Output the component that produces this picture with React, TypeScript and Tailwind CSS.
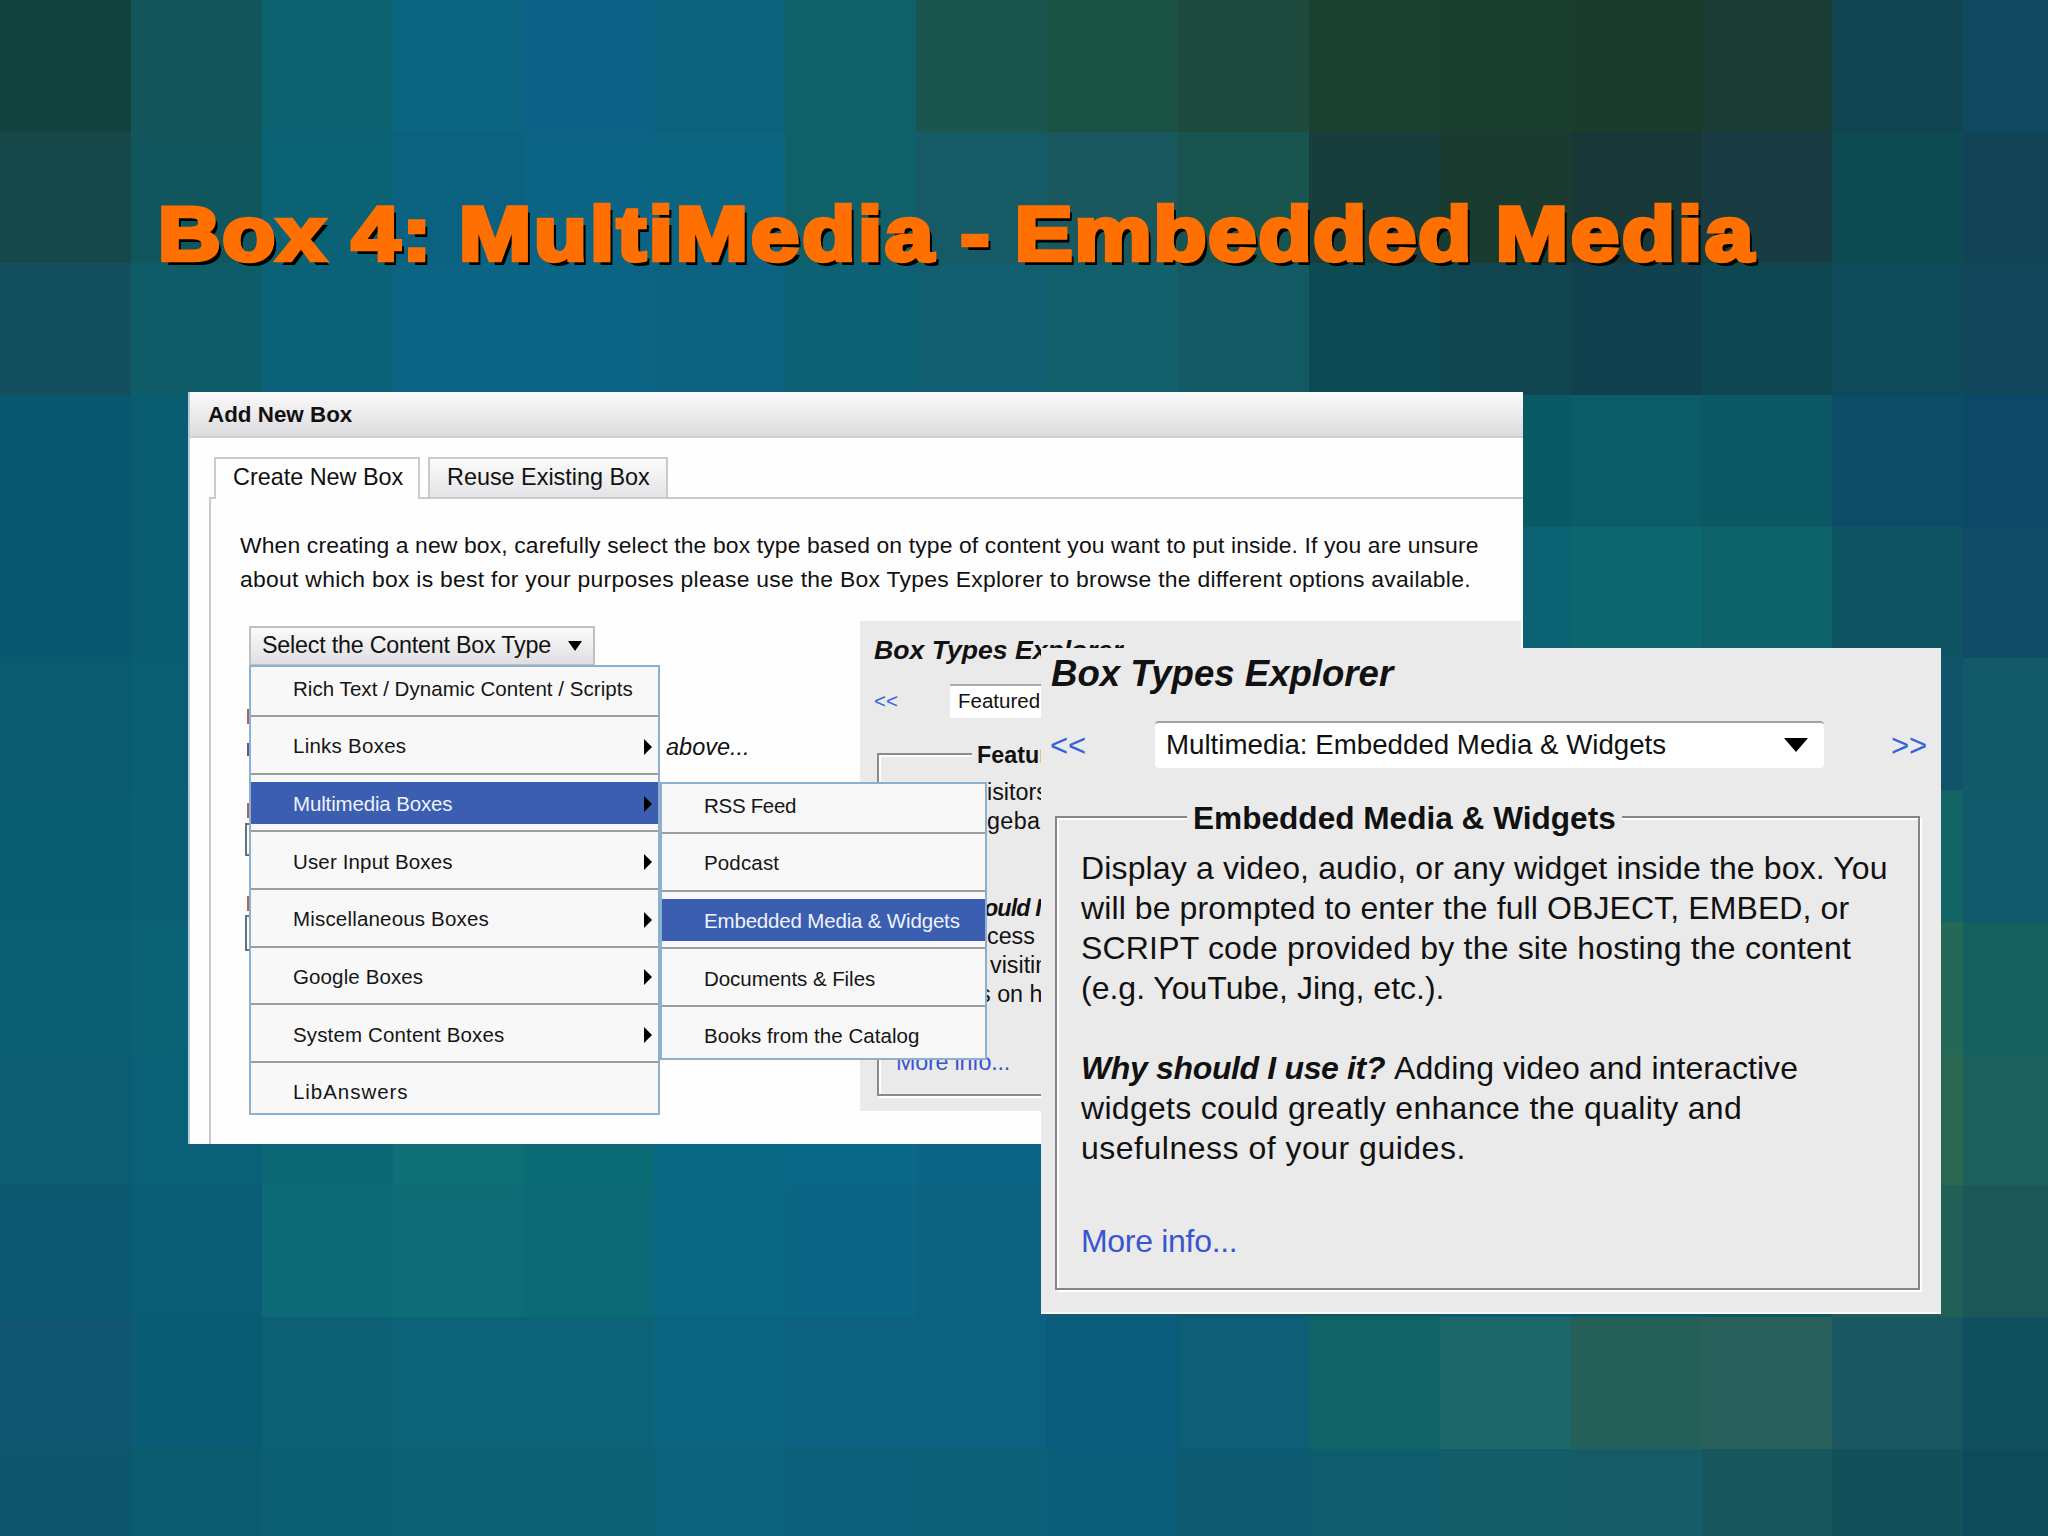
import React from 'react';

interface MenuEntry {
  label: string;
  tracking: string;
  hasChildren?: boolean;
  active?: boolean;
}

interface TitleWord {
  text: string;
  className: string;
}

// Backdrop mosaic, 16 x 12 tiles
const tiles: string[][] = [
  ['14423e', '12555a', '0d6270', '0b6480', '0b6286', '0b627c', '10606a', '1a554e', '1a5244', '1e4a3e', '1c4030', '1a3e2e', '1a3c2c', '1b3c34', '104450', '104860'],
  ['16484a', '10565c', '0b6274', '0b6280', '0b6484', '0b6480', '10606a', '155a64', '18585e', '1a544e', '183e3c', '1a3c30', '183838', '183c42', '0e4a52', '124456'],
  ['125060', '0e5c68', '0b6278', '0b6484', '0b6484', '0c6280', '0c6274', '105e70', '12606c', '145a64', '0e4a54', '10444e', '11414f', '0d4852', '0f4a5a', '12465a'],
  ['0a5870', '0a5c70', '0b6278', '0b6484', '0b6484', '0c6280', '0c6274', '105e70', '12606c', '145a64', '0e4a54', '0a5a66', '0b5c66', '0c5864', '0d4c66', '0e4868'],
  ['0a5870', '0a5c70', '0b6278', '0b6484', '0b6484', '0c6280', '0c6274', '105e70', '12606c', '145a64', '0e5a64', '0a6272', '0b666e', '0c6268', '0e5462', '104c66'],
  ['0a5a70', '0a5e72', '0b6278', '0b6484', '0b6484', '0c6280', '0c6274', '105e70', '12606c', '145a64', '0e5a64', '0a5c70', '0a5c6c', '0c5a68', '0f5468', '125a6a'],
  ['0a5c70', '0a6072', '0b6278', '0b6484', '0b6484', '0c6280', '0c6274', '105e70', '12606c', '145a64', '0e5a64', '0a5c70', '0a5c6c', '0c5a68', '126464', '105a6c'],
  ['0a6070', '0a6274', '0b6278', '0b6484', '0b6484', '0c6280', '0c6274', '105e70', '12606c', '145a64', '0e5a64', '0a5c70', '0a5c6c', '0c5a68', '246858', '14605e'],
  ['0c5c72', '0a6076', '0b6874', '0e7076', '0c6c76', '0a6a86', '0a6888', '0a6486', '12606c', '145a64', '0e5a64', '0a5c70', '0a5c6c', '0c5a68', '2a6854', '1c605c'],
  ['0c5870', '0a5e74', '0e6a76', '0e6c76', '0c6a76', '0a6884', '0a6684', '0c6080', '12606c', '145a64', '0e5a64', '0a5c70', '0a5c6c', '0c5a68', '206056', '1c5858'],
  ['105670', '0a5c74', '0c6074', '0c6276', '0c6276', '0b6480', '0c6280', '0c6080', '095c7c', '0e5e78', '106468', '1c6868', '246058', '2a605c', '1a5660', '10505e'],
  ['0e566c', '0c5c70', '0c5e72', '0c6272', '0e6074', '0b627a', '0c607a', '0c6078', '0b5c78', '0e5a70', '0e5c6c', '145c68', '165c68', '18565e', '12505a', '0d4a5a'],
];

const titleWords: TitleWord[] = [
  { text: 'Box', className: 'w-[170px] tracking-[1.5px]' },
  { text: '4:', className: 'w-[94px] tracking-[2px]' },
  { text: 'MultiMedia', className: 'w-[440px] tracking-[2.6px]' },
  { text: '-', className: 'w-[47.5px]' },
  { text: 'Embedded', className: 'w-[422px] tracking-[1.7px]' },
  { text: 'Media', className: 'w-[230px] tracking-[2.6px]' },
];

const mainMenu: MenuEntry[] = [
  { label: 'Rich Text / Dynamic Content / Scripts', tracking: 'tracking-[0.05px]' },
  { label: 'Links Boxes', tracking: 'tracking-[0.25px]', hasChildren: true },
  { label: 'Multimedia Boxes', tracking: 'tracking-[-0.15px]', hasChildren: true, active: true },
  { label: 'User Input Boxes', tracking: 'tracking-[0.15px]', hasChildren: true },
  { label: 'Miscellaneous Boxes', tracking: 'tracking-[0.18px]', hasChildren: true },
  { label: 'Google Boxes', tracking: 'tracking-[0.12px]', hasChildren: true },
  { label: 'System Content Boxes', tracking: 'tracking-[0.14px]', hasChildren: true },
  { label: 'LibAnswers', tracking: 'tracking-[0.95px]' },
];

const subMenu: MenuEntry[] = [
  { label: 'RSS Feed', tracking: 'tracking-[-0.3px]' },
  { label: 'Podcast', tracking: 'tracking-[0.15px]' },
  { label: 'Embedded Media & Widgets', tracking: 'tracking-[-0.17px]', active: true },
  { label: 'Documents & Files', tracking: 'tracking-[-0.05px]' },
  { label: 'Books from the Catalog', tracking: 'tracking-[0.06px]' },
];

const Backdrop: React.FC = () => (
  <div className="grid h-[1536px] w-[2048px] auto-rows-[131.7px] grid-cols-[repeat(16,130.9px)] bg-[#0f4a5a]">
    {tiles.flat().map((color, index) => (
      <div key={index} style={{ backgroundColor: `#${color}` }} />
    ))}
  </div>
);

const ArrowDown: React.FC<{ className: string }> = ({ className }) => (
  <svg viewBox="0 0 24 14" preserveAspectRatio="none" className={className}>
    <path d="M0 0h24L12 14z" fill="#000" />
  </svg>
);

const ArrowRight: React.FC = () => (
  <svg viewBox="0 0 8 16" className="h-4 w-2">
    <path d="M0 0l8 8-8 8z" fill="#000" />
  </svg>
);

const Menu: React.FC<{ entries: MenuEntry[]; className: string }> = ({ entries, className }) => (
  <ul className={`absolute border-2 border-[#8bb1cf] bg-[#f8f8f9] text-[20.5px] ${className}`}>
    {entries.map((entry, index) => (
      <li
        key={entry.label}
        className={
          index === entries.length - 1
            ? 'pt-[7px]'
            : index === 0
              ? 'border-b-2 border-[#9d9d9f] pb-[6px]'
              : 'border-b-2 border-[#9d9d9f] pt-[7.7px] pb-[6px]'
        }
      >
        <div
          className={`flex h-[42px] items-center justify-between pt-0.5 pr-[6px] pl-[42px] ${
            entry.active ? 'bg-[#3b5eb0] text-[#eef2fb]' : 'text-[#151515]'
          }`}
        >
          <span className={`whitespace-nowrap ${entry.tracking}`}>{entry.label}</span>
          {entry.hasChildren && <ArrowRight />}
        </div>
      </li>
    ))}
  </ul>
);

const AddNewBox: React.FC = () => (
  <section className="absolute top-[392px] left-[188px] h-[752px] w-[1335px] overflow-hidden border-l-2 border-[#b9cbd8] bg-[#fefefe] text-[#111]">
    <header className="flex h-[46px] items-center border-b-2 border-[#cfcfd1] bg-linear-to-b from-[#fafafb] to-[#dcdcde] pt-0.5 pl-[18px] text-[22.4px] font-bold">
      Add New Box
    </header>

    <nav className="mt-[19px] ml-6 flex h-10 text-[23.4px]">
      <div className="relative z-10 -mb-0.5 flex w-[206px] items-center border-2 border-b-0 border-[#cbcbcf] bg-[#fefefe] pb-0.5 pl-[17px]">
        Create New Box
      </div>
      <div className="ml-2 flex w-[240px] items-center border-2 border-b-0 border-[#cbcbcf] bg-linear-to-b from-[#fbfbfb] to-[#e4e3e6] pl-[17px]">
        Reuse Existing Box
      </div>
    </nav>

    <div className="ml-[19px] h-[700px] border-t-2 border-l-2 border-[#cbcbcf] pt-[28.5px]">
      <p className="pl-[29px] text-[22.9px] leading-[34.8px] whitespace-nowrap">
        <span className="tracking-[0.13px]">
          When creating a new box, carefully select the box type based on type of content you want to put inside. If you are unsure
        </span>
        <br />
        <span className="tracking-[0.28px]">
          about which box is best for your purposes please use the Box Types Explorer to browse the different options available.
        </span>
      </p>

      <div className="mt-[23.5px] flex">
        <div className="relative w-[649px] shrink-0 pt-[5px] pl-[38px]">
          <button className="flex h-10 w-[346px] items-center justify-between border-2 border-[#c0c0c4] bg-linear-to-b from-[#fbfbfb] to-[#dfdee1] pr-[11px] pl-[11px] text-[23.3px] tracking-[-0.22px] whitespace-nowrap">
            Select the Content Box Type
            <ArrowDown className="h-[10px] w-[14px]" />
          </button>

          {/* form fields peeking out from behind the menu */}
          <div className="absolute top-[88px] left-[36px] h-[15px] w-1 bg-[#a9685c]" />
          <div className="absolute top-[122px] left-[36px] h-[13px] w-1 bg-[#5a5a80]" />
          <div className="absolute top-[182px] left-[36px] h-[15px] w-1 bg-[#a9685c]" />
          <div className="absolute top-[202px] left-[34px] h-[33px] w-2 border-2 border-[#66707c]" />
          <div className="absolute top-[275px] left-[36px] h-[15px] w-1 bg-[#a9685c]" />
          <div className="absolute top-[294px] left-[34px] h-[36px] w-2 border-2 border-[#66707c]" />
          <span className="absolute top-[109px] left-[455px] text-[23.5px] italic">above...</span>
        </div>

        <div className="h-[490px] w-[661px] shrink-0 bg-[#ebeaeb] pt-[13px] pl-[14px]">
          <h3 className="text-[26.6px] leading-8 font-bold italic">Box Types Explorer</h3>
          <div className="mt-[18px] flex h-[34px] items-center text-[20.5px]">
            <span className="w-[76px] pt-0.5 text-[#3a62d8]">&lt;&lt;</span>
            <span className="flex h-full w-[480px] items-center border-t-2 border-[#a9a9ab] bg-white pl-[8px]">Featured</span>
          </div>
          <div className="mt-[35px] ml-[3px] h-[343px] w-[630px] border-2 border-[#8b8b8d] text-[23.3px] leading-[28.8px] shadow-[inset_2px_2px_0_#fff,2px_2px_0_#fff]">
            <h4 className="-mt-[14px] ml-[93px] w-[200px] bg-[#ebeaeb] pl-[5px] font-bold">Featur</h4>
            <p className="mt-[9px] ml-[108px] w-[200px]">
              isitors
              <br />
              <span className="tracking-[0.4px]">gebas</span>
              <br />
              <br />
              <br />
              <b className="-ml-[3px] tracking-[-0.9px] italic">ould I</b>
              <br />
              cess
              <br />
              <span className="pl-[3px]">visitin</span>
              <br />
              <span className="-ml-[8px]">s</span> on h
            </p>
            <div className="mt-[39px] ml-[17px] tracking-[-0.2px] text-[#3a55d0]">More info...</div>
          </div>
        </div>
      </div>
    </div>

    <Menu entries={mainMenu} className="top-[273px] left-[59px] h-[450px] w-[411px]" />
    <Menu entries={subMenu} className="top-[390px] left-[470px] h-[278px] w-[327px]" />
  </section>
);

const BoxTypesExplorer: React.FC = () => (
  <section className="absolute top-[648px] left-[1041px] h-[666px] w-[900px] border-b-2 border-[#f8f8f8] bg-[#ebeaeb] pt-[4px] text-[#111]">
    <h2 className="pl-[10px] text-[36.6px] leading-[44px] font-bold italic">Box Types Explorer</h2>

    <div className="mt-[25px] flex h-[47px] items-center pl-[9px]">
      <span className="w-[105px] pt-[3px] text-[31px] text-[#3a62d8]">&lt;&lt;</span>
      <div className="flex h-full w-[669px] items-center justify-between rounded-sm border-t-2 border-[#a3a3a5] bg-white pr-4 pb-0.5 pl-[11px] text-[27.7px]">
        Multimedia: Embedded Media &amp; Widgets
        <ArrowDown className="h-[14px] w-6" />
      </div>
      <span className="ml-[67px] pt-[3px] text-[31px] text-[#3a62d8]">&gt;&gt;</span>
    </div>

    <div className="mt-[48px] ml-[14px] h-[474px] w-[865px] border-2 border-[#868688] shadow-[inset_2px_2px_0_#fff,2px_2px_0_#fff]">
      <h3 className="-mt-[18px] ml-[130px] w-[435px] bg-[#ebeaeb] pl-[6px] text-[31.6px] leading-9 font-bold whitespace-nowrap">
        Embedded Media &amp; Widgets
      </h3>
      <div className="mt-[12px] pl-6 text-[32px] leading-10 whitespace-nowrap">
        <p>
          <span className="tracking-[0.14px]">Display a video, audio, or any widget inside the box. You</span>
          <br />
          <span className="tracking-[0.1px]">will be prompted to enter the full OBJECT, EMBED, or</span>
          <br />
          <span className="tracking-[0.18px]">SCRIPT code provided by the site hosting the content</span>
          <br />
          (e.g. YouTube, Jing, etc.).
        </p>
        <p className="mt-10">
          <b className="tracking-[-0.35px] italic">Why should I use it?</b> <span className="tracking-[0.07px]">Adding video and interactive</span>
          <br />
          <span className="tracking-[0.3px]">widgets could greatly enhance the quality and</span>
          <br />
          <span className="tracking-[0.5px]">usefulness of your guides.</span>
        </p>
        <div className="mt-[53px] tracking-[-0.3px] text-[#3a55d0]">More info...</div>
      </div>
    </div>
  </section>
);

const App: React.FC = () => {
  return (
    <main className="relative h-[1536px] w-[2048px] overflow-hidden font-['Liberation_Sans',Arial,sans-serif]">
      <Backdrop />
      <h1 className="absolute top-[188px] left-[158px] flex origin-left scale-x-114 text-[76px] leading-[92px] font-bold whitespace-nowrap text-[#ff7000] [-webkit-text-stroke:4.5px_#ff7000] [text-shadow:4px_5px_0_#000]">
        {titleWords.map(word => (
          <span key={word.text} className={word.className}>
            {word.text}
          </span>
        ))}
      </h1>
      <AddNewBox />
      <BoxTypesExplorer />
    </main>
  );
};

export default App;
